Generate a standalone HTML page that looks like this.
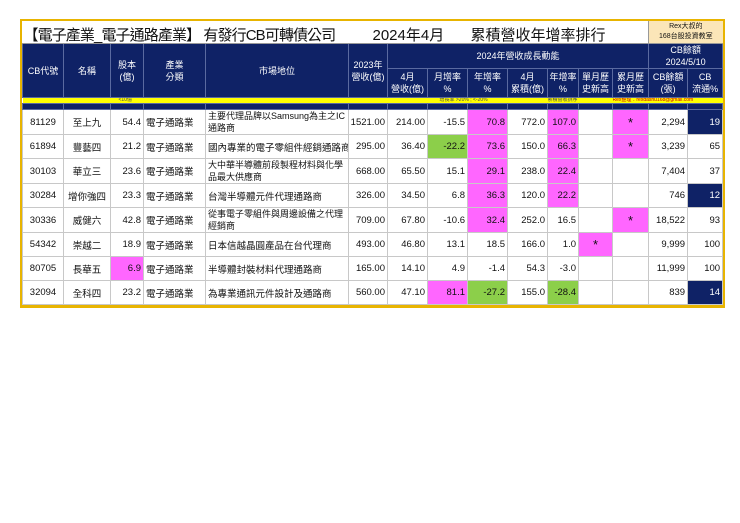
<!DOCTYPE html>
<html><head><meta charset="utf-8"><style>
body{margin:0;width:740px;height:523px;background:#fff;font-family:"Liberation Sans","Noto Sans CJK TC",sans-serif;overflow:hidden}
.wrap{position:absolute;left:20px;top:19px;width:701px;border:2px solid #e8b400;border-bottom-width:3px}
table{border-collapse:collapse;table-layout:fixed;width:701px}
td{padding:0;font-size:9.5px;color:#111;border:1px solid #c8c8c8;overflow:hidden;white-space:nowrap}
.h td{background:#0f2266;color:#fff;text-align:center;border-color:#5a6aa0;line-height:12px;font-size:9px}
.t td{height:22px;border:none;border-bottom:1px solid #999;font-size:15px;position:relative}
.y td{height:5px;background:#ffff00;border:none;font-size:5px;line-height:5px;color:#444}
.n td{height:5px;background:#0f2266;border-color:#5a6aa0}
.d td{height:23px;text-align:right;padding-right:2px}
.c{text-align:center!important;padding-right:0!important}
.l{text-align:left!important;padding-left:2px}
.w{white-space:normal;line-height:12px;font-size:9px}
.p{background:#ff66ff}.g{background:#8ccf4a}.b{background:#0f2266;color:#fff!important}
.s{font-size:13px}
.tt{position:absolute;top:3px;font-size:15px;white-space:nowrap}
</style></head><body><div class="wrap"><table>
<colgroup><col style="width:41px"><col style="width:47px"><col style="width:33px"><col style="width:62px"><col style="width:143px"><col style="width:39px"><col style="width:40px"><col style="width:40px"><col style="width:40px"><col style="width:40px"><col style="width:31px"><col style="width:34px"><col style="width:36px"><col style="width:39px"><col style="width:35px"></colgroup>
<tr class="t"><td colspan="13"><span class="tt" style="left:1px;letter-spacing:-0.9px">【電子產業_電子通路產業】 有發行CB可轉債公司</span><span class="tt" style="left:350px">2024年4月</span><span class="tt" style="left:448px">累積營收年增率排行</span></td><td colspan="2" style="background:#fbe6b8;font-size:7px;text-align:center;line-height:10px;border-left:1px solid #999">Rex大叔的<br>168台股投資教室</td></tr>
<tr class="h"><td rowspan="2">CB代號</td><td rowspan="2">名稱</td><td rowspan="2">股本<br>(億)</td><td rowspan="2">產業<br>分類</td><td rowspan="2">市場地位</td><td rowspan="2">2023年<br>營收(億)</td><td colspan="7" style="height:20px">2024年營收成長動能</td><td colspan="2">CB餘額<br>2024/5/10</td></tr>
<tr class="h"><td style="height:28px">4月<br>營收(億)</td><td>月增率<br>%</td><td>年增率<br>%</td><td>4月<br>累積(億)</td><td>年增率<br>%</td><td>單月歷<br>史新高</td><td>累月歷<br>史新高</td><td>CB餘額<br>(張)</td><td>CB<br>流通%</td></tr>
<tr class="y"><td></td><td></td><td colspan="2" style="padding-left:8px">&lt;10億</td><td></td><td></td><td></td><td colspan="3" style="padding-left:12px">增長率 &gt;20% ; &lt;-20%</td><td colspan="2">累積營收排序</td><td colspan="3" style="color:#c00">Rex整理：rexdashu168@gmail.com</td></tr>
<tr class="n"><td></td><td></td><td></td><td></td><td></td><td></td><td></td><td></td><td></td><td></td><td></td><td></td><td></td><td></td><td></td></tr>
<tr class="d"><td class="c">81129</td><td class="c">至上九</td><td>54.4</td><td class="l">電子通路業</td><td class="l w">主要代理品牌以Samsung為主之IC通路商</td><td>1521.00</td><td>214.00</td><td>-15.5</td><td class="p">70.8</td><td>772.0</td><td class="p">107.0</td><td></td><td class="p c s">*</td><td>2,294</td><td class="b">19</td></tr>
<tr class="d"><td class="c">61894</td><td class="c">豐藝四</td><td>21.2</td><td class="l">電子通路業</td><td class="l">國內專業的電子零組件經銷通路商</td><td>295.00</td><td>36.40</td><td class="g">-22.2</td><td class="p">73.6</td><td>150.0</td><td class="p">66.3</td><td></td><td class="p c s">*</td><td>3,239</td><td>65</td></tr>
<tr class="d"><td class="c">30103</td><td class="c">華立三</td><td>23.6</td><td class="l">電子通路業</td><td class="l w">大中華半導體前段製程材料與化學品最大供應商</td><td>668.00</td><td>65.50</td><td>15.1</td><td class="p">29.1</td><td>238.0</td><td class="p">22.4</td><td></td><td></td><td>7,404</td><td>37</td></tr>
<tr class="d"><td class="c">30284</td><td class="c">增你強四</td><td>23.3</td><td class="l">電子通路業</td><td class="l">台灣半導體元件代理通路商</td><td>326.00</td><td>34.50</td><td>6.8</td><td class="p">36.3</td><td>120.0</td><td class="p">22.2</td><td></td><td></td><td>746</td><td class="b">12</td></tr>
<tr class="d"><td class="c">30336</td><td class="c">威健六</td><td>42.8</td><td class="l">電子通路業</td><td class="l w">從事電子零組件與周邊設備之代理經銷商</td><td>709.00</td><td>67.80</td><td>-10.6</td><td class="p">32.4</td><td>252.0</td><td>16.5</td><td></td><td class="p c s">*</td><td>18,522</td><td>93</td></tr>
<tr class="d"><td class="c">54342</td><td class="c">崇越二</td><td>18.9</td><td class="l">電子通路業</td><td class="l">日本信越晶圓產品在台代理商</td><td>493.00</td><td>46.80</td><td>13.1</td><td>18.5</td><td>166.0</td><td>1.0</td><td class="p c s">*</td><td></td><td>9,999</td><td>100</td></tr>
<tr class="d"><td class="c">80705</td><td class="c">長華五</td><td class="p">6.9</td><td class="l">電子通路業</td><td class="l">半導體封裝材料代理通路商</td><td>165.00</td><td>14.10</td><td>4.9</td><td>-1.4</td><td>54.3</td><td>-3.0</td><td></td><td></td><td>11,999</td><td>100</td></tr>
<tr class="d"><td class="c">32094</td><td class="c">全科四</td><td>23.2</td><td class="l">電子通路業</td><td class="l">為專業通訊元件設計及通路商</td><td>560.00</td><td>47.10</td><td class="p">81.1</td><td class="g">-27.2</td><td>155.0</td><td class="g">-28.4</td><td></td><td></td><td>839</td><td class="b">14</td></tr>
</table></div></body></html>
